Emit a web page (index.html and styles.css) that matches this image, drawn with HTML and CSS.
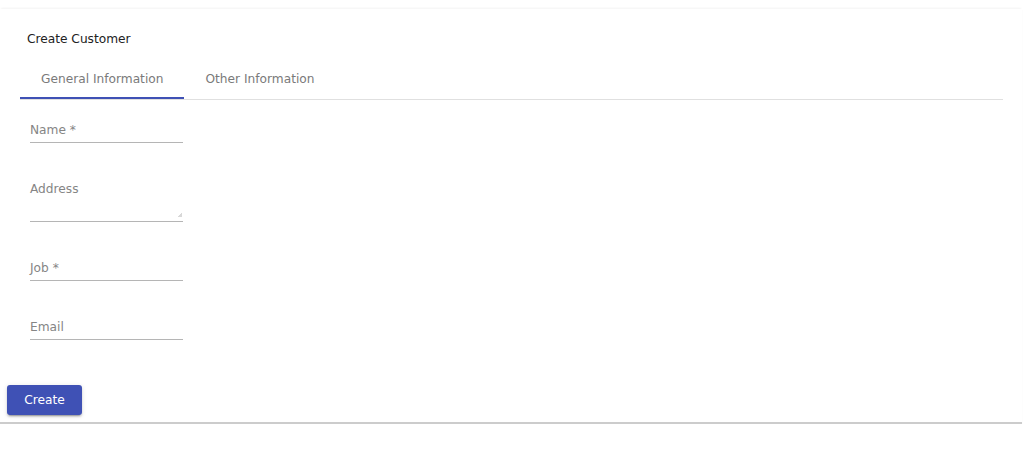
FILE: index.html
```html
<!DOCTYPE html>
<html>
<head>
<meta charset="utf-8">
<link rel="stylesheet" href="styles.css">
</head>
<body>
<div class="card">
  <div class="title">Create Customer</div>
  <div class="tabs">
    <div class="tab active">General Information</div>
    <div class="tab">Other Information</div>
  </div>
  <form class="form">
    <div class="field"><span class="label">Name *</span></div>
    <div class="field area"><span class="label">Address</span><span class="grip"></span></div>
    <div class="field"><span class="label">Job *</span></div>
    <div class="field"><span class="label">Email</span></div>
  </form>
  <div class="actions">
    <button type="button" class="btn">Create</button>
  </div>
</div>
</body>
</html>
```
FILE: styles.css
```css
html, body {
  margin: 0;
  padding: 0;
  background: #fff;
  font-family: "DejaVu Sans", sans-serif;
  font-size: 12.2px;
}
.card {
  margin: 9px 2px 0 0;
  height: 415px;
  box-sizing: border-box;
  background: #fff;
  border-bottom: 2px solid #cccccc;
  box-shadow: 0 1px 1px 0 rgba(0,0,0,.06), 0 -2px 2px -1px rgba(0,0,0,.05);
  padding-top: 23px;
  display: flex;
  flex-direction: column;
}
.title {
  padding-left: 27px;
  line-height: 14px;
  color: #222;
}
.tabs {
  margin: 12px 19px 0 20px;
  display: flex;
  border-bottom: 1px solid #e0e0e0;
}
.tab {
  height: 41px;
  box-sizing: border-box;
  padding: 0 21px;
  display: flex;
  align-items: center;
  color: #7a7a7a;
}
.tab.active {
  border-bottom: 2px solid #3f51b5;
  padding-top: 2px;
}
.form {
  margin: 22px 0 0 30px;
  display: flex;
  flex-direction: column;
  gap: 38px;
}
.field {
  width: 153px;
  height: 20px;
  border-bottom: 1px solid #b5b5b5;
  position: relative;
}
.field.area {
  height: 40px;
}
.label {
  display: block;
  line-height: 16px;
  color: #858585;
}
.grip {
  position: absolute;
  right: 1px;
  bottom: 4px;
  width: 5px;
  height: 5px;
  background: linear-gradient(135deg, transparent 50%, #d8d8d8 50%);
}
.actions {
  margin: 45px 0 0 7px;
}
.btn {
  width: 75px;
  height: 30px;
  border: none;
  border-radius: 3px;
  background: #3f51b5;
  color: #fff;
  font-family: "DejaVu Sans", sans-serif;
  font-size: 12.2px;
  padding: 0;
  box-shadow: 0 3px 1px -2px rgba(0,0,0,.2), 0 2px 2px 0 rgba(0,0,0,.14), 0 1px 5px 0 rgba(0,0,0,.12);
}
```
